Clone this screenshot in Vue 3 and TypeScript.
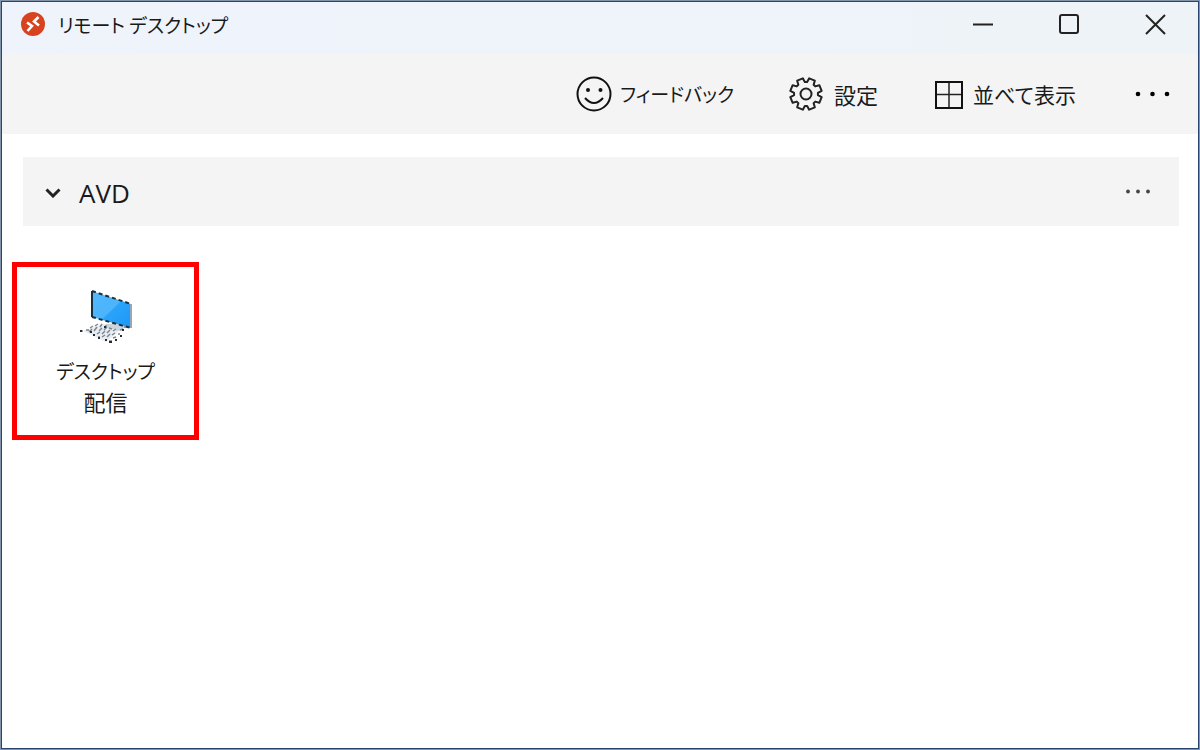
<script setup lang="ts">
import { ref } from 'vue'

interface Workspace {
  name: string
  resources: { id: number; lines: string[] }[]
}

const open = ref(true)
const workspace: Workspace = {
  name: 'AVD',
  resources: [{ id: 1, lines: ['デスクトップ', '配信'] }],
}

// Outline of an eight-toothed gear centred on the origin.
function gearPath(teeth: number, outer: number, inner: number): string {
  const step = 360 / teeth
  const points: string[] = []
  const add = (r: number, deg: number) => {
    const a = (deg * Math.PI) / 180
    points.push(`${(r * Math.cos(a)).toFixed(2)} ${(r * Math.sin(a)).toFixed(2)}`)
  }
  for (let i = 0; i < teeth; i++) {
    const mid = i * step + step / 2
    add(inner, mid - 17)
    add(outer, mid - 11)
    add(outer, mid + 11)
    add(inner, mid + 17)
  }
  return `M${points.join('L')}Z`
}
const gear = gearPath(8, 16, 12)

// Key marks of the small keyboard in the desktop icon.
const keys = [
  'M2 41h3M8 40h3M12 38l3-2M17 36l3-2M22 37l2-3M27 36h2',
  'M11 42l3-3M16 41l3-4M21 41l3-3M26 40l3-3M31 38l3 1',
  'M15 45h2M19 44l3-2M24 44l3-3M29 43l3-3M35 41l3-2',
  'M20 47h2M24 47l3-2M29 47l3-3M34 45l3-2M40 44h2M42 40l3-1',
  'M27 50h2M31 51h3M35 48l3-1M37 50h1M46 37h2',
]
</script>

<template>
  <div class="window">
    <header class="titlebar">
      <svg class="logo" viewBox="0 0 24 24" aria-hidden="true">
        <circle cx="12" cy="12" r="12" fill="#d8431f" />
        <path d="M6 10.500l5 3.500L6.500 19M17.500 5L13 9.500L18 13.500" fill="none" stroke="#fff" stroke-width="2.600" />
      </svg>
      <h1 class="title">リモート デスクトップ</h1>
      <div class="controls">
        <button type="button" aria-label="最小化">
          <svg viewBox="0 0 22 22"><path d="M1 11.500h20" /></svg>
        </button>
        <button type="button" aria-label="最大化">
          <svg viewBox="0 0 22 22"><rect x="2" y="2" width="18" height="18" rx="2" /></svg>
        </button>
        <button type="button" aria-label="閉じる">
          <svg viewBox="0 0 22 22"><path d="M2 2l19 19M21 2l-19 19" /></svg>
        </button>
      </div>
    </header>

    <nav class="toolbar">
      <button type="button" class="tool feedback">
        <svg viewBox="0 0 36 36" aria-hidden="true">
          <circle cx="18" cy="18" r="16.500" fill="none" stroke="#111" stroke-width="2" />
          <circle cx="12" cy="14" r="2" fill="#111" />
          <circle cx="24.500" cy="14" r="2" fill="#111" />
          <path d="M9 22Q18 32 27 22" fill="none" stroke="#111" stroke-width="2" />
        </svg>
        <span>フィードバック</span>
      </button>
      <button type="button" class="tool settings">
        <svg viewBox="-18 -18 36 36" aria-hidden="true">
          <g fill="none" stroke="#222" stroke-width="2" stroke-linejoin="round">
            <path :d="gear" />
            <circle r="5.500" />
          </g>
        </svg>
        <span>設定</span>
      </button>
      <button type="button" class="tool tiles">
        <svg class="grid" viewBox="0 0 28 30" aria-hidden="true">
          <path d="M14 2v27M2 15.500h24" stroke="#222" stroke-width="1.500" />
          <rect x="1" y="3" width="26" height="26" fill="none" stroke="#111" stroke-width="2" />
        </svg>
        <span>並べて表示</span>
      </button>
      <button type="button" class="more" aria-label="その他">
        <svg viewBox="0 0 36 6"><circle cx="3" cy="3" r="2.300" /><circle cx="17.500" cy="3" r="2.300" /><circle cx="32" cy="3" r="2.300" /></svg>
      </button>
    </nav>

    <main class="content">
      <div class="group">
        <button type="button" class="toggle" :aria-expanded="open" @click="open = !open">
          <svg class="chevron" :class="{ closed: !open }" viewBox="0 0 16 10" aria-hidden="true">
            <path d="M1.500 1.500L8 8l6.500-6.500" />
          </svg>
          <span>{{ workspace.name }}</span>
        </button>
        <button type="button" class="group-more" aria-label="ワークスペースのメニュー">
          <svg viewBox="0 0 26 6"><circle cx="3" cy="2.500" r="1.900" /><circle cx="13" cy="2.500" r="1.900" /><circle cx="23" cy="2.500" r="1.900" /></svg>
        </button>
      </div>

      <div v-if="open" class="resources">
        <button v-for="item in workspace.resources" :key="item.id" type="button" class="resource">
          <svg class="desktop" viewBox="0 0 56 54" aria-hidden="true">
            <defs>
              <linearGradient id="screen" x1="0" y1="0" x2="1" y2="1">
                <stop offset="0" stop-color="#51b9fb" />
                <stop offset=".5" stop-color="#4bb4fb" />
                <stop offset=".52" stop-color="#2ba3fb" />
                <stop offset="1" stop-color="#1b98f5" />
              </linearGradient>
            </defs>
            <path d="M5 41L25 34h23l-8 8-12 10z" fill="#e9edf1" />
            <path d="M28 34l12-1 8 4-7 4-13-4z" fill="#cdd5dc" />
            <path d="M14 1L53 14V38L14 27z" fill="url(#screen)" />
            <path d="M53 14V38" stroke="#94a8b8" stroke-width="2" />
            <path d="M14 1V27" stroke="#17313f" stroke-width="2" />
            <path d="M14 1L53 14M14 27L53 38" stroke="#17313f" stroke-width="2" stroke-dasharray="4 3" />
            <g fill="none" stroke="#7b8791" stroke-width="1.500">
              <path v-for="(row, i) in keys" :key="i" :d="row" />
            </g>
            <path d="M2 41h2M12 42h2M15 45h2M20 48h2M27 50h2M31 52h3M37 50h2M42 46h2M44 40h2M26 37h2" stroke="#252b30" stroke-width="2" />
          </svg>
          <span v-for="line in item.lines" :key="line" class="label">{{ line }}</span>
        </button>
      </div>
    </main>
  </div>
</template>

<style>
body {
  margin: 0;
}
</style>

<style scoped>
.window {
  box-sizing: border-box;
  min-height: 100vh;
  display: flex;
  flex-direction: column;
  border: 1px solid #8293ac;
  box-shadow: inset 0 0 0 1px #29456f;
  padding: 1px;
  background: #fff;
  color: #1a1a1a;
  font-family: "Noto Sans CJK JP", "Noto Sans", sans-serif;
  font-feature-settings: "palt";
}

button {
  display: flex;
  align-items: center;
  padding: 0;
  border: 0;
  background: none;
  color: inherit;
  font: inherit;
  font-feature-settings: inherit;
}

svg {
  display: block;
  flex: none;
}

.titlebar {
  display: flex;
  align-items: flex-start;
  height: 52px;
  padding-left: 19px;
  background: linear-gradient(90deg, #eff4fc, #eef3f8);
}

.logo {
  width: 24px;
  height: 24px;
  margin-top: 10px;
}

.title {
  margin: 7px 0 0 13px;
  font-size: 19px;
  line-height: 32px;
  font-weight: 400;
}

.controls {
  display: flex;
  margin-left: auto;
}

.controls button {
  justify-content: center;
  width: 86px;
  height: 44px;
}

.controls svg {
  width: 22px;
  height: 22px;
  fill: none;
  stroke: #222;
  stroke-width: 2;
}

.toolbar {
  display: flex;
  align-items: center;
  justify-content: flex-end;
  height: 80px;
  padding-right: 27px;
  background: #f4f4f4;
}

.tool {
  gap: 10px;
  line-height: 32px;
}

.tool svg {
  width: 36px;
  height: 36px;
}

.tool .grid {
  width: 28px;
  height: 30px;
}

.feedback {
  gap: 8px;
  margin-right: 54px;
  font-size: 19px;
}

.settings {
  margin-right: 57px;
  font-size: 22px;
}

.tiles {
  margin-right: 59px;
  font-size: 21px;
}

.more svg {
  width: 36px;
  height: 6px;
}

.content {
  padding: 23px 19px 23px 10px;
}

.group {
  display: flex;
  align-items: center;
  justify-content: space-between;
  height: 69px;
  margin-left: 11px;
  padding: 0 28px 0 22px;
  background: #f4f4f4;
}

.toggle {
  gap: 18px;
  padding-top: 2px;
  font-family: "Open Sans", "Noto Sans", sans-serif;
  font-size: 26px;
  line-height: 36px;
}

.chevron {
  width: 16px;
  height: 10px;
  fill: none;
  stroke: #222;
  stroke-width: 3;
}

.chevron.closed {
  transform: rotate(-90deg);
}

.group-more svg {
  width: 26px;
  height: 6px;
  fill: #444;
}

.resources {
  display: flex;
  flex-wrap: wrap;
  gap: 16px;
  padding-top: 36px;
}

.resource {
  flex-direction: column;
  box-sizing: border-box;
  width: 187px;
  padding: 23px 0 18px;
  border: 5px solid #fe0000;
}

.desktop {
  width: 56px;
  height: 54px;
  margin-bottom: 11px;
}

.label {
  font-size: 19px;
  line-height: 31px;
}

.label + .label {
  font-size: 22px;
}
</style>
